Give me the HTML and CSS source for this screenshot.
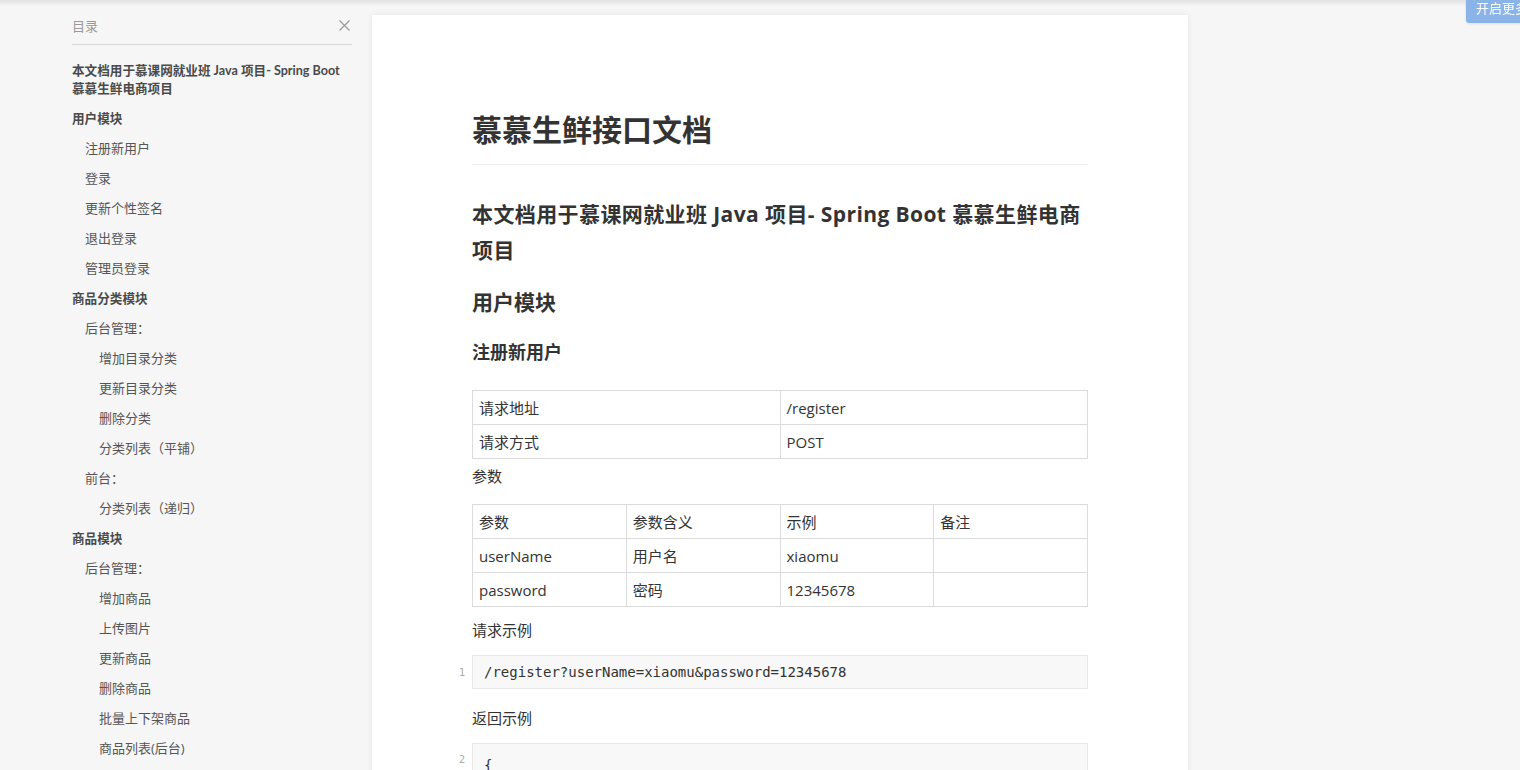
FILE: index.html
```html
<!DOCTYPE html>
<html lang="zh-CN">
<head>
    <meta charset="UTF-8">
    <title>慕慕生鲜接口文档</title>
    <link rel="stylesheet" href="styles.css">
</head>
<body>
    <div class="top-shadow"></div>
    <a class="more-btn">开启更多功能</a>

    <div class="layout">
        <aside class="toc">
            <div class="toc-header">
                <span>目录</span>
                <svg class="toc-close" width="11" height="11" viewBox="0 0 11 11">
                    <path d="M0.5 0.5 L10.5 10.5 M10.5 0.5 L0.5 10.5" stroke="#9a9a9a" stroke-width="1.2" fill="none"/>
                </svg>
            </div>
            <ul class="toc-list">
                <li class="lv1">本文档用于慕课网就业班 Java 项目- Spring Boot 慕慕生鲜电商项目</li>
                <li class="lv1">用户模块</li>
                <li class="lv2">注册新用户</li>
                <li class="lv2">登录</li>
                <li class="lv2">更新个性签名</li>
                <li class="lv2">退出登录</li>
                <li class="lv2">管理员登录</li>
                <li class="lv1">商品分类模块</li>
                <li class="lv2">后台管理：</li>
                <li class="lv3">增加目录分类</li>
                <li class="lv3">更新目录分类</li>
                <li class="lv3">删除分类</li>
                <li class="lv3">分类列表（平铺）</li>
                <li class="lv2">前台：</li>
                <li class="lv3">分类列表（递归）</li>
                <li class="lv1">商品模块</li>
                <li class="lv2">后台管理：</li>
                <li class="lv3">增加商品</li>
                <li class="lv3">上传图片</li>
                <li class="lv3">更新商品</li>
                <li class="lv3">删除商品</li>
                <li class="lv3">批量上下架商品</li>
                <li class="lv3">商品列表(后台)</li>
            </ul>
        </aside>

        <main class="paper">
            <h1 class="doc-title">慕慕生鲜接口文档</h1>
            <h2 class="doc-sub">本文档用于慕课网就业班 Java 项目- Spring Boot 慕慕生鲜电商项目</h2>
            <h3 class="module">用户模块</h3>
            <h4 class="api">注册新用户</h4>

            <table class="grid grid-info">
                <tr><td>请求地址</td><td>/register</td></tr>
                <tr><td>请求方式</td><td>POST</td></tr>
            </table>

            <p class="label label-params">参数</p>

            <table class="grid grid-params">
                <tr><td>参数</td><td>参数含义</td><td>示例</td><td>备注</td></tr>
                <tr><td>userName</td><td>用户名</td><td>xiaomu</td><td></td></tr>
                <tr><td>password</td><td>密码</td><td>12345678</td><td></td></tr>
            </table>

            <p class="label label-req">请求示例</p>
            <div class="code">
                <span class="line-no">1</span>
                <pre>/register?userName=xiaomu&amp;password=12345678</pre>
            </div>

            <p class="label label-res">返回示例</p>
            <div class="code code-json">
                <span class="line-no">2</span>
                <pre>{
    "status": 10000,
    "msg": "SUCCESS",
    "data": null
}</pre>
            </div>
        </main>
    </div>
</body>
</html>
```

FILE: styles.css
```css
html, body {
    margin: 0;
    padding: 0;
    height: 100%;
    overflow: hidden;
}

body {
    background-color: #f6f6f6;
    font-family: "Open Sans", "Noto Sans CJK SC", sans-serif;
    color: #333;
}

.top-shadow {
    position: fixed;
    top: 0;
    left: 0;
    right: 0;
    height: 6px;
    background: linear-gradient(to bottom, rgba(0,0,0,0.08), rgba(0,0,0,0));
    z-index: 50;
}

.more-btn {
    position: fixed;
    top: 0;
    left: 1466px;
    width: 120px;
    height: 23px;
    padding-left: 10px;
    background-color: #8ab3e8;
    color: #fff;
    font-size: 13px;
    line-height: 17px;
    border-bottom-left-radius: 3px;
    box-shadow: 0 1px 3px rgba(0,0,0,0.1);
    white-space: nowrap;
    z-index: 60;
}

.layout {
    display: flex;
    gap: 20px;
    padding-left: 72px;
}

/* table of contents */
.toc {
    width: 280px;
    flex-shrink: 0;
    padding-top: 15px;
    font-size: 13px;
}

.toc-header {
    display: flex;
    justify-content: space-between;
    align-items: center;
    height: 20px;
    padding-bottom: 9px;
    border-bottom: 1px solid #d8d8d8;
    color: #999;
}

.toc-close {
    margin-right: 2px;
}

.toc-list {
    list-style: none;
    margin: 10px 0 0;
    padding: 0;
}

.toc-list li {
    padding: 6px 0;
    line-height: 18px;
    color: #555;
}

.toc-list .lv1 {
    padding: 7px 0 5px;
    font-family: "Lato", "Noto Sans CJK SC", sans-serif;
    font-size: 12.6px;
    font-weight: bold;
    color: #4a4a4a;
}

.toc-list .lv2 {
    padding-left: 13px;
}

.toc-list .lv3 {
    padding-left: 27px;
}

/* document */
.paper {
    width: 816px;
    flex-shrink: 0;
    margin-top: 15px;
    padding: 94px 100px 40px;
    box-sizing: border-box;
    min-height: 900px;
    background-color: #fff;
    box-shadow: 0 0 6px rgba(0,0,0,0.08);
}

.doc-title {
    margin: 0;
    font-size: 30px;
    line-height: 42px;
    font-weight: bold;
    color: #333;
    padding-bottom: 13px;
    border-bottom: 1px solid #eee;
}

.doc-sub {
    margin: 31px 0 0;
    font-size: 21px;
    line-height: 36px;
    font-weight: bold;
    letter-spacing: 0.4px;
}

.module {
    margin: 16px 0 0;
    font-size: 21px;
    line-height: 36px;
    font-weight: bold;
}

.api {
    margin: 17px 0 0;
    font-size: 18px;
    line-height: 30px;
    font-weight: bold;
}

.grid {
    width: 100%;
    border-collapse: collapse;
    table-layout: fixed;
    font-size: 15px;
}

.grid td {
    height: 33px;
    padding: 0 6px;
    border: 1px solid #dcdcdc;
    color: #333;
}

.grid-info {
    margin-top: 23px;
}

.grid-params {
    margin-top: 16px;
}

.label {
    margin: 10px 0 0;
    font-size: 15px;
    line-height: 24px;
}

.label-params {
    margin-top: 5px;
}

.label-req {
    margin-top: 11px;
}

.label-res {
    margin-top: 17px;
}

.code {
    position: relative;
    margin-top: 13px;
    background-color: #f8f8f8;
    border: 1px solid #e8e8e8;
}

.code pre {
    margin: 0;
    padding: 0 11px;
    height: 32px;
    line-height: 32px;
    font-family: "DejaVu Sans Mono", monospace;
    font-size: 14px;
    color: #333;
}

.code-json pre {
    height: auto;
    padding-top: 8px;
    line-height: 26px;
}

.line-no {
    position: absolute;
    left: -14px;
    top: 0;
    line-height: 34px;
    font-size: 10px;
    color: #aaa;
    font-family: "DejaVu Sans Mono", monospace;
}

.code-json .line-no {
    top: -1px;
}
```
